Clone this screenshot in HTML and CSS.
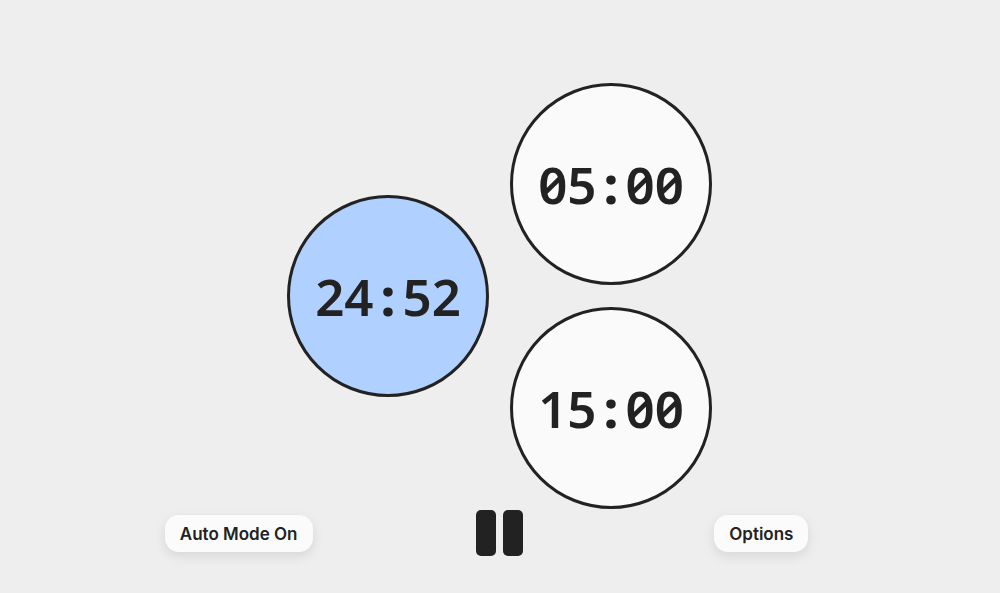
FILE: index.html
```html
<!DOCTYPE html>
<html lang="en">
<head>
<meta charset="utf-8">
<meta name="viewport" content="width=device-width, initial-scale=1">
<title>Timer</title>
<link rel="stylesheet" href="styles.css">
</head>
<body>
<main class="app">
  <section class="timers" aria-label="Timers">
    <button class="timer timer-active" type="button"><span class="time">24<span class="colon">:</span>52</span></button>
    <div class="breaks">
      <button class="timer" type="button"><span class="time">05<span class="colon">:</span>00</span></button>
      <button class="timer" type="button"><span class="time">15<span class="colon">:</span>00</span></button>
    </div>
  </section>
  <footer class="controls">
    <button class="pill" type="button">Auto Mode On</button>
    <button class="pause" type="button" aria-label="Pause"><span class="bar"></span><span class="bar"></span></button>
    <button class="pill" type="button">Options</button>
  </footer>
</main>
</body>
</html>
```
FILE: styles.css
```css
* {
  box-sizing: border-box;
}

body {
  margin: 0;
  background: #eee;
  color: #222;
  font-family: Inter, "Liberation Sans", sans-serif;
}

button {
  margin: 0;
  padding: 0;
  border: 0;
  background: none;
  color: inherit;
  font: inherit;
  cursor: pointer;
}

.app {
  display: flex;
  flex-direction: column;
  justify-content: flex-end;
  gap: 1px;
  min-height: 100vh;
  padding-bottom: 37px;
}

.timers {
  display: flex;
  justify-content: center;
  align-items: center;
  gap: 21px;
  padding-right: 1px;
}

.breaks {
  display: flex;
  flex-direction: column;
  gap: 22px;
}

.timer {
  display: flex;
  justify-content: center;
  align-items: center;
  width: 202px;
  height: 202px;
  border: 3px solid #222;
  border-radius: 50%;
  background: #fafafa;
}

.timer-active {
  background: #b0d0ff;
}

.time {
  font-family: "Noto Sans", "Liberation Sans", sans-serif;
  font-size: 51px;
  font-weight: 600;
  line-height: 60px;
  font-variant-numeric: slashed-zero tabular-nums;
}

.colon {
  display: inline-block;
  width: 29px;
  font-weight: 800;
  text-align: center;
}

.controls {
  display: grid;
  grid-template-columns: repeat(3, 1fr);
  place-items: center;
  width: 100%;
  max-width: 784px;
  margin: 0 auto;
}

.pill {
  padding: 9px 15px 8px;
  border-radius: 14px;
  background: #fbfbfb;
  box-shadow: 0 4px 12px rgba(0, 0, 0, 0.1);
  font-size: 17px;
  font-weight: 600;
  line-height: 20px;
  font-variation-settings: "opsz" 20;
}

.pause {
  display: flex;
  gap: 7px;
}

.bar {
  width: 20px;
  height: 46px;
  border-radius: 5px;
  background: #222;
}
```
